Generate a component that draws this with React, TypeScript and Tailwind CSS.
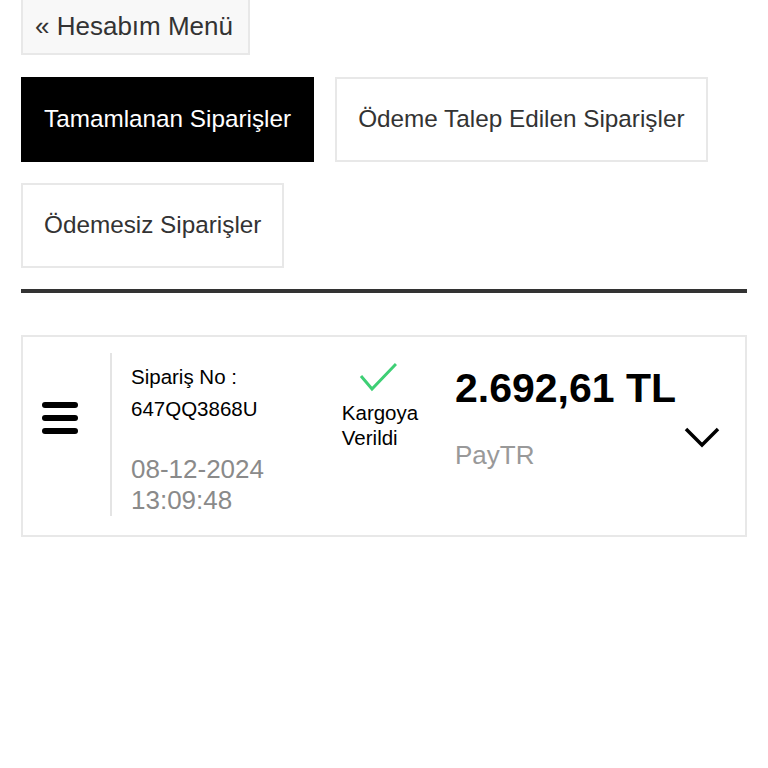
import React from "react";

const TABS = [
  { label: "Tamamlanan Siparişler", active: true },
  { label: "Ödeme Talep Edilen Siparişler", active: false },
  { label: "Ödemesiz Siparişler", active: false },
];

export default function App() {
  return (
    <div
      className="min-h-screen bg-white px-[21px] text-[#333]"
      style={{ fontFamily: '"Liberation Sans", Arial, sans-serif' }}
    >
      {/* Back to account menu */}
      <div className="-mt-[2px] flex h-[57px] w-[229px] items-center border-2 border-[#e8e8e8] bg-[#f8f8f8] pl-[12px] text-[26px]">
        « Hesabım Menü
      </div>

      {/* Order tabs */}
      <div className="mt-[22px] flex flex-wrap gap-[21px]">
        {TABS.map((tab) => (
          <button
            key={tab.label}
            className={`flex h-[85px] items-center px-[21px] text-[24.3px] ${
              tab.active
                ? "border-2 border-black bg-black text-white"
                : "border-2 border-[#e8e8e8] bg-white text-[#333]"
            }`}
          >
            {tab.label}
          </button>
        ))}
      </div>

      <div className="mt-[21px] h-[4px] bg-[#333]" />

      {/* Order card */}
      <div className="mt-[42px] flex border-2 border-[#e8e8e8] pb-[19px] pt-[16px]">
        <div className="w-[87px] pl-[19px]">
          <div className="mt-[49px] flex w-[36px] flex-col gap-[7px]">
            <span className="h-[6px] rounded-full bg-black" />
            <span className="h-[6px] rounded-full bg-black" />
            <span className="h-[6px] rounded-full bg-black" />
          </div>
        </div>

        <div className="w-[216px] border-l-2 border-[#e4e4e4] pl-[19px]">
          <div className="mt-[8px] text-[20.5px] leading-[32px] text-black">Sipariş No :</div>
          <div className="text-[20.5px] leading-[32px] text-black">647QQ3868U</div>
          <div className="mt-[29px] text-[26px] leading-[31px] text-[#8a8a8a]">
            08-12-2024
            <br />
            13:09:48
          </div>
        </div>

        <div className="flex w-[100px] flex-col items-center">
          <svg width="38" height="30" viewBox="0 0 38 30" className="ml-[3px] mt-[9px]">
            <path d="M2 14 L13 27 L37 2" fill="none" stroke="#3ecf75" strokeWidth="3" />
          </svg>
          <div className="ml-[8px] mt-[8px] text-left text-[20.5px] leading-[25px] text-black">
            Kargoya
            <br />
            Verildi
          </div>
        </div>

        <div className="ml-[29px]">
          <div className="mt-[11px] text-[41px] font-bold leading-[48px] text-black">2.692,61 TL</div>
          <div className="mt-[27px] text-[26px] leading-[32px] text-[#999]">PayTR</div>
        </div>

        <div className="ml-auto mr-[24px] mt-[72px]">
          <svg width="38" height="24" viewBox="0 0 38 24">
            <path d="M3 4 L19 20 L35 4" fill="none" stroke="black" strokeWidth="3.5" />
          </svg>
        </div>
      </div>
    </div>
  );
}
